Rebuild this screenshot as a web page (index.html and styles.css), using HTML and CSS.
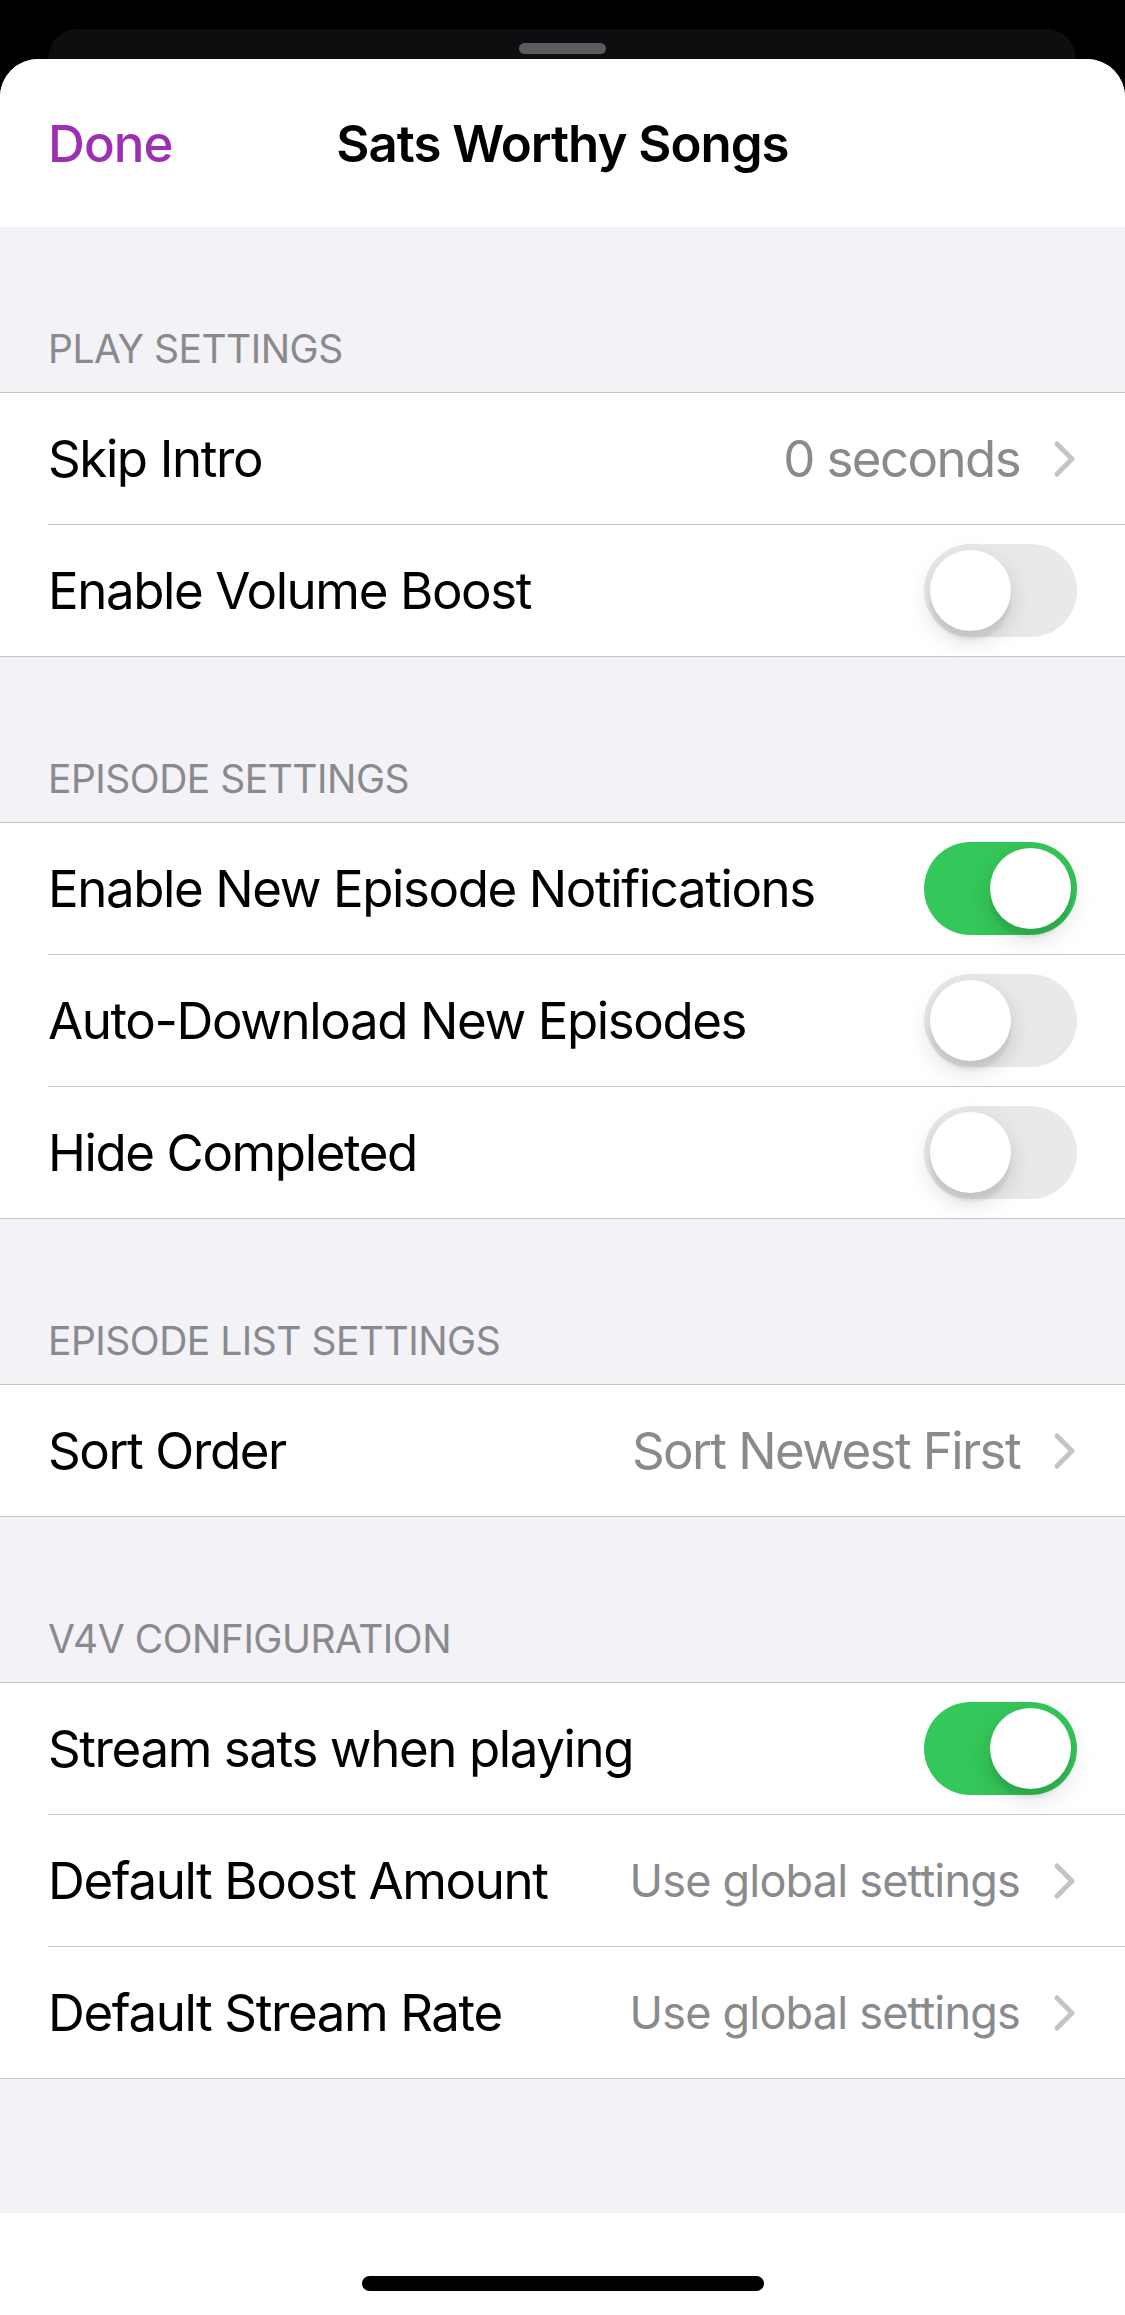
FILE: index.html
```html
<!DOCTYPE html>
<html>
<head>
<meta charset="utf-8">
<link rel="stylesheet" href="styles.css">
</head>
<body>
<div class="screen">
  <div class="backdrop">
    <div class="behind-card"><div class="grabber"></div></div>
  </div>
  <div class="sheet">
    <div class="navbar">
      <div class="nav-left">Done</div>
      <div class="nav-title">Sats Worthy Songs</div>
      <div class="nav-right"></div>
    </div>

    <div class="section-header">PLAY SETTINGS</div>
    <div class="group">
      <div class="row"><div class="row-inner">
        <span class="label">Skip Intro</span>
        <span class="value">0 seconds</span>
        <svg class="chevron" viewBox="0 0 24 36"><path d="M4 3 L19 18 L4 33" fill="none" stroke="#c4c4c7" stroke-width="5" stroke-linecap="round" stroke-linejoin="round"/></svg>
      </div></div>
      <div class="row"><div class="row-inner">
        <span class="label">Enable Volume Boost</span>
        <span class="toggle"><span class="knob"></span></span>
      </div></div>
    </div>

    <div class="section-header">EPISODE SETTINGS</div>
    <div class="group">
      <div class="row"><div class="row-inner">
        <span class="label">Enable New Episode Notifications</span>
        <span class="toggle on"><span class="knob"></span></span>
      </div></div>
      <div class="row"><div class="row-inner">
        <span class="label">Auto-Download New Episodes</span>
        <span class="toggle"><span class="knob"></span></span>
      </div></div>
      <div class="row"><div class="row-inner">
        <span class="label">Hide Completed</span>
        <span class="toggle"><span class="knob"></span></span>
      </div></div>
    </div>

    <div class="section-header">EPISODE LIST SETTINGS</div>
    <div class="group">
      <div class="row"><div class="row-inner">
        <span class="label">Sort Order</span>
        <span class="value">Sort Newest First</span>
        <svg class="chevron" viewBox="0 0 24 36"><path d="M4 3 L19 18 L4 33" fill="none" stroke="#c4c4c7" stroke-width="5" stroke-linecap="round" stroke-linejoin="round"/></svg>
      </div></div>
    </div>

    <div class="section-header">V4V CONFIGURATION</div>
    <div class="group">
      <div class="row"><div class="row-inner">
        <span class="label">Stream sats when playing</span>
        <span class="toggle on"><span class="knob"></span></span>
      </div></div>
      <div class="row"><div class="row-inner">
        <span class="label">Default Boost Amount</span>
        <span class="value small">Use global settings</span>
        <svg class="chevron" viewBox="0 0 24 36"><path d="M4 3 L19 18 L4 33" fill="none" stroke="#c4c4c7" stroke-width="5" stroke-linecap="round" stroke-linejoin="round"/></svg>
      </div></div>
      <div class="row"><div class="row-inner">
        <span class="label">Default Stream Rate</span>
        <span class="value small">Use global settings</span>
        <svg class="chevron" viewBox="0 0 24 36"><path d="M4 3 L19 18 L4 33" fill="none" stroke="#c4c4c7" stroke-width="5" stroke-linecap="round" stroke-linejoin="round"/></svg>
      </div></div>
    </div>

    <div class="bottom-fill"></div>
    <div class="home-area"><div class="home-indicator"></div></div>
  </div>
</div>
</body>
</html>
```

FILE: styles.css
```css
html, body {
  margin: 0;
  padding: 0;
  background: #000;
}
.screen {
  width: 1125px;
  height: 2315px;
  overflow: hidden;
  background: #000;
  font-family: Inter, "Noto Sans", "Liberation Sans", sans-serif;
  color: #000;
}
.backdrop {
  height: 59px;
  padding-top: 29px;
  box-sizing: border-box;
  padding-left: 48px;
  padding-right: 49px;
}
.behind-card {
  height: 30px;
  background: #0e0e10;
  border-radius: 38px 38px 0 0;
  display: flex;
  justify-content: center;
  padding-top: 14px;
  box-sizing: border-box;
}
.grabber {
  width: 87px;
  height: 11px;
  border-radius: 6px;
  background: #5b5b5f;
}
.sheet {
  background: #f2f2f7;
  border-radius: 38px 38px 0 0;
  overflow: hidden;
  height: 2256px;
  display: flex;
  flex-direction: column;
}
.navbar {
  height: 168px;
  flex: none;
  background: #fff;
  display: grid;
  grid-template-columns: 1fr auto 1fr;
  align-items: center;
  padding: 0 48px;
}
.nav-left {
  font-size: 51px;
  color: #9c30b5;
  letter-spacing: -0.9px;
  font-weight: 500;
}
.nav-title {
  font-size: 51px;
  font-weight: 600;
  letter-spacing: -1px;
}
.section-header {
  height: 165px;
  flex: none;
  box-sizing: border-box;
  display: flex;
  align-items: flex-end;
  padding: 0 48px 20px;
  font-size: 39px;
  line-height: 46px;
  color: #8a8a8e;
  letter-spacing: -0.5px;
}
.group {
  flex: none;
  background: #fff;
  border-top: 1px solid #c6c6c8;
  border-bottom: 1px solid #c6c6c8;
}
.row {
  padding-left: 48px;
}
.row + .row .row-inner {
  border-top: 1px solid #c6c6c8;
}
.row-inner {
  height: 131px;
  display: flex;
  align-items: center;
  padding-right: 48px;
}
.label {
  font-size: 51px;
  letter-spacing: -1.4px;
  flex: 1;
  white-space: nowrap;
}
.value {
  font-size: 51px;
  letter-spacing: -1.6px;
  color: #8a8a8e;
  white-space: nowrap;
}
.value.small {
  font-size: 45px;
  letter-spacing: -0.8px;
}
.chevron {
  width: 24px;
  height: 36px;
  margin-left: 33px;
  flex: none;
}
.toggle {
  flex: none;
  width: 153px;
  height: 93px;
  border-radius: 47px;
  background: #e9e9eb;
  position: relative;
}
.toggle .knob {
  position: absolute;
  top: 6px;
  left: 6px;
  width: 81px;
  height: 81px;
  border-radius: 50%;
  background: #fff;
  box-shadow: 0 9px 24px rgba(0, 0, 0, 0.15), 0 9px 3px rgba(0, 0, 0, 0.06);
}
.toggle.on {
  background: #34c759;
}
.toggle.on .knob {
  left: 66px;
}
.bottom-fill {
  height: 134px;
  flex: none;
}
.home-area {
  flex: 1;
  background: #fff;
  display: flex;
  justify-content: center;
  padding-top: 63px;
}
.home-indicator {
  width: 402px;
  height: 15px;
  border-radius: 8px;
  background: #000;
}
```
